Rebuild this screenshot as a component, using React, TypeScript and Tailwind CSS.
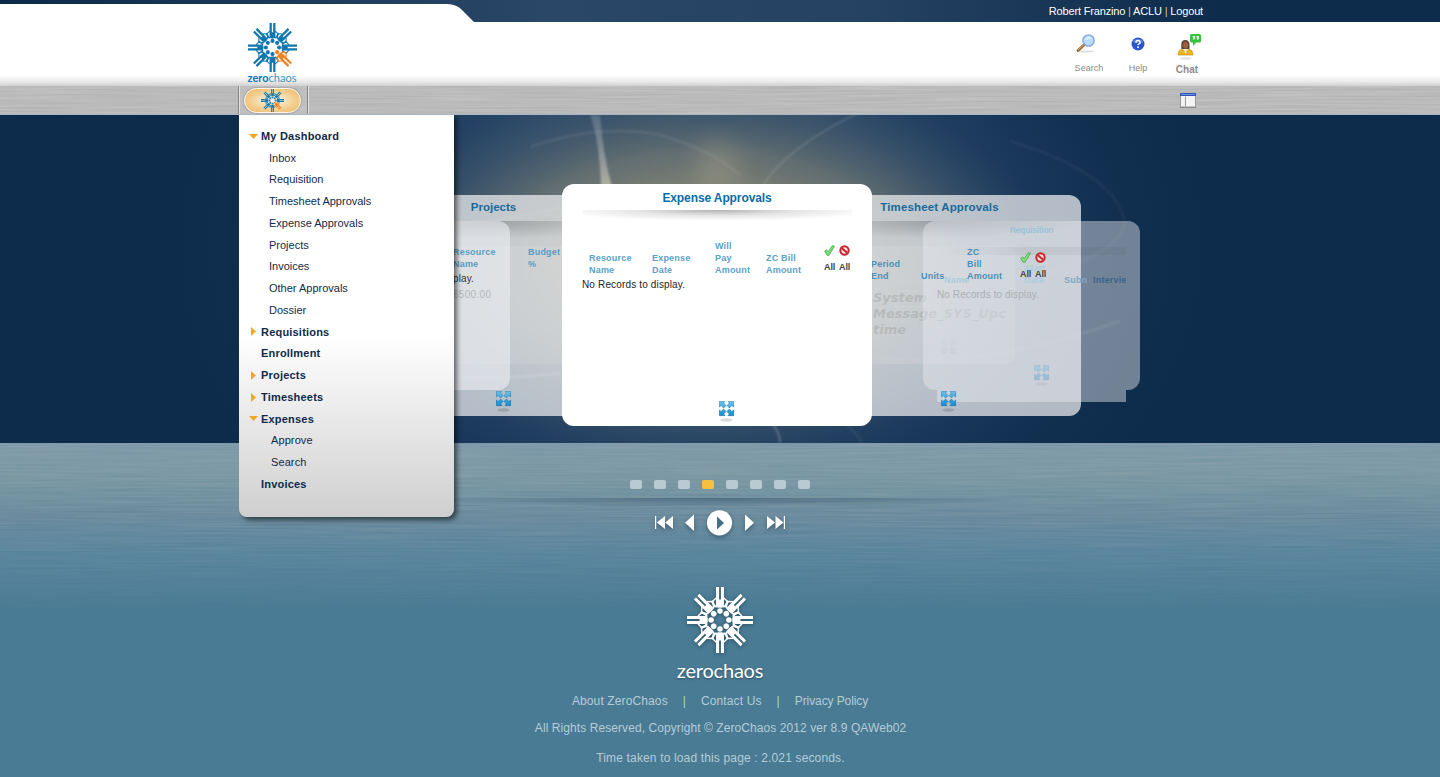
import type { ReactNode } from "react";

const ARIAL = "font-['Liberation_Sans',Arial,sans-serif]";

function Logo({ size, color, accent }: { size: number; color: string; accent: string }) {
  return (
    <svg width={size} height={size} viewBox="-50 -50 100 100" className="block overflow-visible">
      {[0, 45, 90, 180, 225, 270, 315, 135].map((a) => {
        const c = a === 135 ? accent : color;
        return (
          <g key={a} transform={`rotate(${a})`} fill={c}>
            <path d="M-6 -50h4.600v19h2.800v-19H6v27q0 4.500 -4 4.500h-4q-4 0 -4 -4.500z" />
            <circle cy="-13.500" r="4.200" />
            <path d="M-5 -20Q-10.500 -21 -11.500 -29M5 -20Q10.500 -21 11.500 -29" fill="none" stroke={c} strokeWidth="3" />
            <path d="M-5 -34L-11.500 -28M5 -34L11.500 -28" fill="none" stroke={c} strokeWidth="2.200" />
          </g>
        );
      })}
    </svg>
  );
}

function Grain({ id, tone, opacity, fade }: { id: string; tone: number; opacity: number; fade?: boolean }) {
  return (
    <svg
      className={
        "absolute inset-0 h-full w-full " + (fade ? "[mask-image:linear-gradient(#000_45%,transparent)]" : "")
      }
    >
      <filter id={id} x="0" y="0" width="100%" height="100%" colorInterpolationFilters="sRGB">
        <feTurbulence type="fractalNoise" baseFrequency="0.012 0.6" numOctaves="1" seed="7" />
        <feColorMatrix values={`0 0 0 0 ${tone} 0 0 0 0 ${tone} 0 0 0 0 ${tone} 1.8 0 0 0 -0.4`} />
      </filter>
      <rect width="100%" height="100%" filter={`url(#${id})`} opacity={opacity} />
    </svg>
  );
}

function ExpandIcon() {
  return (
    <svg width="16" height="22" viewBox="0 0 16 22" className="block">
      <defs>
        <linearGradient id="xp" x1="0" y1="0" x2="0" y2="15" gradientUnits="userSpaceOnUse">
          <stop stopColor="#6fc0ea" />
          <stop offset=".5" stopColor="#3ea8e0" />
          <stop offset="1" stopColor="#0a8fd8" />
        </linearGradient>
        <linearGradient id="xpe" x1="0" y1="0" x2="0" y2="15" gradientUnits="userSpaceOnUse">
          <stop stopColor="#3f93c4" />
          <stop offset="1" stopColor="#126a9f" />
        </linearGradient>
      </defs>
      <g fill="url(#xp)" stroke="url(#xpe)" strokeWidth=".7">
        <path d="M.4 .4h5.600L4.500 2 7 4.500 4.600 6.900 2.100 4.400 .4 6z" />
        <path d="M14.600 .4H9L10.500 2 8 4.500 10.400 6.900 12.900 4.400 14.600 6z" />
        <path d="M.4 14.600h5.600L4.500 13 7 10.500 4.600 8.100 2.100 10.600 .4 9z" />
        <path d="M14.600 14.600H9L10.500 13 8 10.500 10.400 8.100 12.900 10.600 14.600 9z" />
      </g>
      <ellipse cx="7.500" cy="19" rx="6" ry="1.700" fill="#000" opacity=".14" />
    </svg>
  );
}

function CheckIcon() {
  return (
    <svg width="11" height="11" viewBox="0 0 11 11" className="block">
      <path d="M.6 6.300 2.600 4.800 4.200 6.700 8.400 .6 10.500 1.200 5 10.400 3 10.200z" fill="#7fdc78" stroke="#4aa84d" strokeWidth=".8" />
    </svg>
  );
}

function BanIcon() {
  return (
    <svg width="11" height="11" viewBox="0 0 11 11" className="block">
      <circle cx="5.500" cy="5.500" r="4.200" fill="#f6dcdc" stroke="#c8262c" strokeWidth="2" />
      <path d="M2.800 3.200 8.200 7.800" stroke="#c8262c" strokeWidth="2" />
    </svg>
  );
}

function BulkActions() {
  return (
    <div className="flex gap-[3px] text-[9px] font-bold leading-[10px] tracking-[-0.1px] text-[#444]">
      <div className="flex w-[12px] flex-col gap-[6px]">
        <CheckIcon />
        <span>All</span>
      </div>
      <div className="flex w-[12px] flex-col gap-[6px]">
        <BanIcon />
        <span>All</span>
      </div>
    </div>
  );
}

function Col({ children, className }: { children: ReactNode; className: string }) {
  return <div className={"shrink-0 whitespace-pre " + className}>{children}</div>;
}

const HEAD = "text-[9px] font-bold leading-[12px] tracking-[0.2px] ";

function MenuRow({ label, kind }: { label: string; kind: string }) {
  if (kind === "item" || kind === "deep") {
    return (
      <a className={"flex h-[21.75px] items-center text-[11px] text-[#0f2b4b] " + (kind === "deep" ? "pl-[32px] tracking-[0.1px]" : "pl-[30px]")}>
        {label}
      </a>
    );
  }
  return (
    <a className="flex h-[21.75px] items-center text-[11px] font-bold tracking-[0.2px] text-[#0f2b4b]">
      <span className="flex w-[22px] justify-center pl-[7px]">
        {kind === "open" && (
          <svg width="9" height="5" viewBox="0 0 9 5"><path d="M0 0h9L4.500 5z" fill="#f5a623" /></svg>
        )}
        {kind === "closed" && (
          <svg width="5" height="9" viewBox="0 0 5 9"><path d="M0 0v9L5 4.500z" fill="#f5a623" /></svg>
        )}
      </span>
      {label}
    </a>
  );
}

const MENU: [string, string][] = [
  ["My Dashboard", "open"],
  ["Inbox", "item"],
  ["Requisition", "item"],
  ["Timesheet Approvals", "item"],
  ["Expense Approvals", "item"],
  ["Projects", "item"],
  ["Invoices", "item"],
  ["Other Approvals", "item"],
  ["Dossier", "item"],
  ["Requisitions", "closed"],
  ["Enrollment", "leaf"],
  ["Projects", "closed"],
  ["Timesheets", "closed"],
  ["Expenses", "open"],
  ["Approve", "deep"],
  ["Search", "deep"],
  ["Invoices", "leaf"],
];

function SideMenu() {
  return (
    <nav className="absolute left-[239px] top-[115px] z-30 h-[402px] w-[215px] rounded-b-[8px] bg-[linear-gradient(#fff_0,#fff_220px,#cfcfcf_100%)] pt-[10.200px] shadow-[3px_3px_5px_rgba(0,0,0,0.55)] [clip-path:inset(0_-12px_-12px_0)]">
      {MENU.map(([label, kind], i) => (
        <MenuRow key={i} label={label} kind={kind} />
      ))}
    </nav>
  );
}

function HeroBackdrop() {
  return (
    <svg className="absolute inset-0 h-full w-full" viewBox="0 0 1440 328" preserveAspectRatio="none">
      <defs>
        <radialGradient id="blue" cx="0" cy="0" r="1" gradientUnits="userSpaceOnUse" gradientTransform="translate(690 130) scale(540 400)">
          <stop stopColor="#465f74" />
          <stop offset=".4" stopColor="#2d4b6a" />
          <stop offset=".65" stopColor="#1b395d" stopOpacity=".85" />
          <stop offset="1" stopColor="#0d2b4a" stopOpacity="0" />
        </radialGradient>
        <radialGradient id="warm" cx="0" cy="0" r="1" gradientUnits="userSpaceOnUse" gradientTransform="translate(705 150) scale(350 190)">
          <stop stopColor="#a8a083" stopOpacity="1" />
          <stop offset=".35" stopColor="#8e8b75" stopOpacity=".9" />
          <stop offset=".6" stopColor="#757a72" stopOpacity=".68" />
          <stop offset=".8" stopColor="#56656c" stopOpacity=".35" />
          <stop offset="1" stopColor="#3b5068" stopOpacity="0" />
        </radialGradient>
        <linearGradient id="beam" x1="0" y1="0" x2="0" y2="1">
          <stop stopColor="#9db0c0" stopOpacity=".3" />
          <stop offset="1" stopColor="#e8dfc8" stopOpacity=".55" />
        </linearGradient>
        <filter id="soft" x="-10%" y="-10%" width="120%" height="120%"><feGaussianBlur stdDeviation="1.2" /></filter>
        <filter id="softer" x="-100%" y="-100%" width="300%" height="300%"><feGaussianBlur stdDeviation="12" /></filter>
      </defs>
      <rect width="1440" height="328" fill="#0d2b4a" />
      <rect width="1440" height="328" fill="url(#blue)" />
      <rect width="1440" height="328" fill="url(#warm)" />
      <ellipse cx="718" cy="52" rx="22" ry="26" fill="#b0a78c" opacity=".35" filter="url(#softer)" />
      <g filter="url(#soft)" fill="none" stroke="#cfd4cf">
        <path d="M590 0Q599 22 601 70L612 72Q603 40 600 0z" fill="url(#beam)" stroke="none" />
        <path d="M762 72Q784 34 860 -3" strokeWidth="1.500" strokeOpacity=".2" />
        <path d="M530 32Q600 8 660 20Q710 34 740 60" strokeWidth="2" strokeOpacity=".13" />
        <path d="M850 152Q900 172 1000 168Q1110 150 1125 110Q1120 60 1010 26" strokeWidth="2" strokeOpacity=".07" />
        <path d="M454 262Q520 264 562 258" strokeWidth="2" strokeOpacity=".3" />
        <path d="M454 108Q510 106 562 92" strokeWidth="1.500" strokeOpacity=".22" />
        <path d="M780 328Q780 318 772 308" strokeWidth="2.500" strokeOpacity=".24" />
        <path d="M842 306Q856 316 862 328" strokeWidth="2" strokeOpacity=".1" />
        <path d="M850 238Q960 262 1120 206" strokeWidth="2" strokeOpacity=".12" />
      </g>
    </svg>
  );
}

function Carousel() {
  return (
    <>
      <section className="absolute left-[425px] top-[131px] h-[118px] w-[590px] rounded-[10px] bg-[#f2f0e6]/15" />

      <section className="absolute left-[352px] top-[80px] h-[221px] w-[283px] rounded-[12px] bg-[#e8eaec]/75">
        <h2 className="h-[26px] text-center text-[11.5px] font-bold leading-[25px] text-[#176a9b]">Projects</h2>
        <div className="h-[18px] bg-[radial-gradient(ellipse_50%_100%_at_50%_0,rgba(0,0,0,0.2),transparent)]" />
      </section>
      <section className="absolute left-[293px] top-[106px] h-[169px] w-[217px] rounded-[12px] bg-[#eceff2]/60" />
      <div className="absolute left-[453px] top-[131px]">
        <div className={HEAD + "flex text-[#5a9dc2]"}>
          <Col className="w-[75px]">{"Resource\nName"}</Col>
          <Col className="w-[40px]">{"Budget\n%"}</Col>
        </div>
        <div className="pt-[3px] text-[10px] leading-[12px] tracking-[0.1px] text-[#333]">play.</div>
        <div className="pt-[4px] text-[10px] leading-[12px] tracking-[0.300px] text-[#b4b8bb]">6500.00</div>
      </div>
      <div className="absolute left-[496px] top-[276px]"><ExpandIcon /></div>

      <section className="absolute left-[798px] top-[80px] h-[221px] w-[283px] rounded-[12px] bg-[#e8eaec]/75">
        <h2 className="h-[26px] text-center text-[11.5px] font-bold leading-[25px] tracking-[0.15px] text-[#176a9b]">Timesheet Approvals</h2>
        <div className="h-[18px] bg-[radial-gradient(ellipse_50%_100%_at_50%_0,rgba(0,0,0,0.2),transparent)]" />
      </section>
      <div className="absolute left-[873px] top-[175px] whitespace-pre font-['DejaVu_Sans',sans-serif] text-[13px] font-bold italic leading-[16px] text-[#85887f]/30">
        {"System\nMessage_SYS_Upc\ntime"}
      </div>
      <div className="absolute left-[941px] top-[224px] opacity-10 grayscale"><ExpandIcon /></div>
      <section className="absolute left-[923px] top-[106px] h-[169px] w-[217px] rounded-[12px] bg-[#e9ecf0]/45">
        <h2 className="h-[26px] text-center text-[8.500px] font-bold leading-[18px] tracking-[-0.25px] text-[#9cc3d8]">Requisition</h2>
        <div className="mx-[14px] h-[8px] bg-[linear-gradient(90deg,transparent,rgba(0,0,0,0.06)_50%,rgba(0,0,0,0.03))]" />
        <div className={HEAD + "flex w-[203px] items-end overflow-hidden pl-[21px] pt-[7px] text-[#35658d]"}>
          <Col className="w-[80px] text-[#acccdc]">Name</Col>
          <Col className="w-[40px] text-[#acccdc]">{"Start\nDate"}</Col>
          <Col className="w-[29px] text-[#7fa9c4]">Subn</Col>
          <Col className="w-[33px]">Intervie</Col>
        </div>
        <div className="pl-[14px] pt-[3px] text-[10px] leading-[12px] tracking-[0.1px] text-[#acafb3]">No Records to display.</div>
        <div className="absolute left-[111px] top-[144px] opacity-30"><ExpandIcon /></div>
        <div className="absolute left-[14px] top-[169px] h-[12px] w-[189px] bg-[#e9ecf0]/45" />
      </section>
      <div className="absolute left-[871px] top-[131px] text-[#4a90b8]">
        <div className={HEAD + "flex items-end"}>
          <Col className="w-[50px]">{"Period\nEnd"}</Col>
          <Col className="w-[46px]">Units</Col>
          <Col className="w-[53px]">{"ZC\nBill\nAmount"}</Col>
          <div className="h-[31px] self-start pt-[6px]"><BulkActions /></div>
        </div>
      </div>
      <div className="absolute left-[941px] top-[276px]"><ExpandIcon /></div>

      <section className="absolute left-[562px] top-[69px] h-[242px] w-[310px] rounded-[12px] bg-white">
        <h2 className="h-[26px] text-center text-[12px] font-bold leading-[28px] tracking-[-0.1px] text-[#0a6da8]">Expense Approvals</h2>
        <div className="mx-[20px] h-[11px] bg-[radial-gradient(ellipse_60%_100%_at_50%_0,rgba(0,0,0,0.3),rgba(0,0,0,0.1)_50%,transparent)]" />
        <div className={HEAD + "flex items-end pl-[27px] pt-[19px] text-[#5ba1c8]"}>
          <Col className="w-[63px]">{"Resource\nName"}</Col>
          <Col className="w-[63px]">{"Expense\nDate"}</Col>
          <Col className="w-[51px]">{"Will\nPay\nAmount"}</Col>
          <Col className="w-[58px]">{"ZC Bill\nAmount"}</Col>
          <div className="h-[31px]"><BulkActions /></div>
        </div>
        <p className="pl-[20px] pt-[3px] text-[10px] leading-[12px] tracking-[0.15px] text-[#222]">No Records to display.</p>
        <div className="absolute left-[157px] top-[217px]"><ExpandIcon /></div>
      </section>
    </>
  );
}

function Header() {
  return (
    <header className="relative h-[86px] w-full bg-[linear-gradient(90deg,#0b2a4a,#2a4767_38%,#264263_60%,#0d2b4a_85%)]">
      <svg className="absolute inset-0" width="1440" height="86" viewBox="0 0 1440 86">
        <defs>
          <linearGradient id="hd" x1="0" y1="0" x2="0" y2="86" gradientUnits="userSpaceOnUse">
            <stop offset=".88" stopColor="#fff" />
            <stop offset=".95" stopColor="#e9e9e9" />
            <stop offset="1" stopColor="#cfcfcf" />
          </linearGradient>
        </defs>
        <path d="M0 4H447Q457 4 463 11L474 22H1440V86H0z" fill="url(#hd)" />
      </svg>
      <div className="relative mx-auto flex w-[964px] justify-between">
        <div className="flex w-[68px] flex-col items-center pt-[23px]">
          <Logo size={49} color="#0f76b0" accent="#f58220" />
          <div className="font-['Lato',sans-serif] text-[11px] leading-[12px] text-[#3f93c0]">
            <span className="font-bold text-[#0f76b0]">zero</span>chaos
          </div>
        </div>
        <div className="flex flex-col items-end">
          <div className="-mr-[1px] h-[22px] whitespace-pre text-[11px] leading-[23px] tracking-[-0.16px] text-white">
            Robert Franzino <span className="text-[#e3b9a0]">|</span> ACLU <span className="text-[#e3b9a0]">|</span> Logout
          </div>
          <div className="-mr-[12px] flex text-[9px] tracking-[0.05px] text-[#8a8a8a]">
            <div className="flex w-[54px] flex-col items-center pt-[11px]">
              <svg width="22" height="22" viewBox="0 0 22 22" className="mr-[6px]">
                <ellipse cx="11" cy="18.500" rx="8" ry="1" fill="#ddd" />
                <path d="M3 17.500 9.500 11.500" stroke="#9b6a3c" strokeWidth="3" strokeLinecap="round" />
                <path d="M3 17 9 11.500" stroke="#e0a664" strokeWidth="1" />
                <circle cx="13.500" cy="7.500" r="5.600" fill="#b9dcfb" stroke="#7fa6d6" strokeWidth="1.400" />
                <path d="M10 7a4 4 0 0 1 7-1.500Q14 5 10 7z" fill="#e8f5ff" />
              </svg>
              <span className="pt-[6px] leading-[14px]">Search</span>
            </div>
            <div className="flex w-[44px] flex-col items-center pt-[11px]">
              <svg width="22" height="22" viewBox="0 0 22 22">
                <circle cx="11" cy="11" r="6.500" fill="#2a55cc" />
                <path d="M5.500 9a6 5 0 0 1 11 0q-5 2.500-11 0z" fill="#6f93ea" opacity=".6" />
                <path d="M8.900 9.600Q9 7.600 11 7.600T13.100 9.400Q13.100 10.300 12 10.900T11 12.200" fill="none" stroke="#fff" strokeWidth="1.500" />
                <circle cx="11" cy="14.300" r=".95" fill="#fff" />
              </svg>
              <span className="pt-[6px] leading-[14px]">Help</span>
            </div>
            <div className="flex w-[54px] flex-col items-center pt-[11px]">
              <svg width="26" height="28" viewBox="0 0 26 28" className="ml-[4px]">
                <ellipse cx="9.500" cy="25.500" rx="6" ry="1.500" fill="#e4e4e4" />
                <path d="M5.300 16V11.500Q5.300 7 9.300 7T13.500 11.500V16z" fill="#5a4338" />
                <ellipse cx="9.500" cy="12.200" rx="2.600" ry="3.400" fill="#9c603b" />
                <path d="M2 22Q2 17 6.500 16.300L9.500 19 12.500 16.300Q17 17 17 22z" fill="#ecb521" stroke="#b8860e" strokeWidth=".6" />
                <path d="M7.600 16 9.500 21 11.400 16z" fill="#f7e8d8" />
                <path d="M15 1H23.500Q25 1 25 2.500V8Q25 9.500 23.500 9.500H20L17 13V9.500H15.500Q14 9.500 14 8V2.500Q14 1 15.500 1z" fill="#35c23c" />
                <path d="M16.700 3.500h2v2L17.500 6.800M20.500 3.500h2v2L21.300 6.800" stroke="#fff" strokeWidth=".8" fill="#fff" />
              </svg>
              <span className="pt-[2px] text-[10px] font-bold leading-[14px]">Chat</span>
            </div>
          </div>
        </div>
      </div>
    </header>
  );
}

function ToolBar() {
  return (
    <div className="relative h-[29px] w-full border-b border-[#a9b6c6] bg-[#b3b3b3]">
      <Grain id="steel" tone={1} opacity={0.2} />
      <div className="relative mx-auto flex h-full w-[964px] items-center justify-between pl-[1px] pr-[5px]">
        <div className="-ml-[1px] flex h-full w-[70px] items-center justify-center border-x border-[#858585] bg-[#c9c9c9]/40 pr-[1px] shadow-[1px_0_0_#e2e2e2,inset_1px_0_0_#e2e2e2]">
          <div className="flex h-[25px] w-[57px] items-center justify-center rounded-full border-[1.5px] border-[#fdf6ea] bg-[radial-gradient(ellipse_at_center,#fbeed8_15%,#f3cc8c_60%,#eeb867)] shadow-[0_0_2px_#777]">
            <Logo size={23} color="#1b7cae" accent="#f58220" />
          </div>
        </div>
        <svg width="17" height="15" viewBox="0 0 17 15">
          <path d="M.5 .5h15v13.500H.5z" fill="#f4f4f4" stroke="#999" />
          <path d="M0 0h16v3H0z" fill="#2d52b8" />
          <path d="M1 1h14v.8H1z" fill="#86a5ee" />
          <path d="M5.500 3.500v10" stroke="#999" />
          <path d="M0 14.500h16" stroke="#888" />
        </svg>
      </div>
    </div>
  );
}

function Player() {
  return (
    <div className="relative flex flex-col items-center">
      <div className="flex gap-[12px] pt-[37px]">
        {[0, 1, 2, 3, 4, 5, 6, 7].map((i) => (
          <span key={i} className={"h-[9px] w-[12px] rounded-[2px] " + (i === 3 ? "bg-[#f7c040]" : "bg-[#b9cad2]")} />
        ))}
      </div>
      <div className="mt-[9px] h-[9px] w-[620px] bg-[radial-gradient(ellipse_50%_100%_at_50%_0,rgba(20,45,75,0.35),transparent)]" />
      <svg width="136" height="32" viewBox="0 0 136 32" className="mt-[1px] block overflow-visible [filter:drop-shadow(0_2px_2px_rgba(20,50,70,0.5))]">
        <g fill="#fff">
          <path d="M3 8h1.200v13H3zM13 8v13L4.800 14.500zM21 8v13l-7.800-6.500z" />
          <path d="M42 6.500v16.500L33 14.800z" />
          <circle cx="67.500" cy="14.800" r="12.600" />
          <path d="M93 6.500v16.500l9-8.200z" />
          <path d="M115 8v13l8-6.500zM123.500 8v13l8-6.500zM131.800 8H133v13h-1.200z" />
        </g>
        <path d="M65 8.500v13l7-6.500z" fill="#456f87" />
      </svg>
    </div>
  );
}

function Footer() {
  return (
    <footer className="relative flex flex-col items-center text-[12px] leading-[16px] text-[#b5cbd6]">
      <div className="pt-[47px] [filter:drop-shadow(0_1px_2px_rgba(20,50,70,0.6))]">
        <Logo size={66} color="#fff" accent="#fff" />
      </div>
      <div className="h-[40px] pt-[4px] font-['Lato',sans-serif] text-[20px] leading-[26px] tracking-[-0.2px] text-white [text-shadow:0_1px_2px_rgba(20,50,70,0.6)]">
        zerochaos
      </div>
      <div className="flex gap-[15px] tracking-[0.12px]">
        <a>About ZeroChaos</a>
        <span className="text-[#a5d8c0]">|</span>
        <a>Contact Us</a>
        <span className="text-[#a5d8c0]">|</span>
        <a className="tracking-[-0.1px]">Privacy Policy</a>
      </div>
      <p className="pl-[1px] pt-[11px] tracking-[0.08px]">All Rights Reserved, Copyright © ZeroChaos 2012 ver 8.9 QAWeb02</p>
      <p className="pl-[1px] pt-[14px] tracking-[0.15px]">Time taken to load this page : 2.021 seconds.</p>
    </footer>
  );
}

export default function App() {
  return (
    <div className={"relative flex h-[777px] w-[1440px] flex-col overflow-hidden bg-[#4a7b94] " + ARIAL}>
      <Header />
      <ToolBar />
      <main className="relative h-[328px] w-full shrink-0 overflow-hidden">
        <HeroBackdrop />
        <Carousel />
      </main>
      <div className="relative flex-1">
        <div className="absolute inset-x-0 top-0 h-[170px] bg-[linear-gradient(#7a97a8,#7796a1_30px,#64879b_75px,#56839c_110px,#4a7b94)]">
          <Grain id="water" tone={0.8} opacity={0.16} fade />
        </div>
        <Player />
        <Footer />
      </div>
      <SideMenu />
    </div>
  );
}
